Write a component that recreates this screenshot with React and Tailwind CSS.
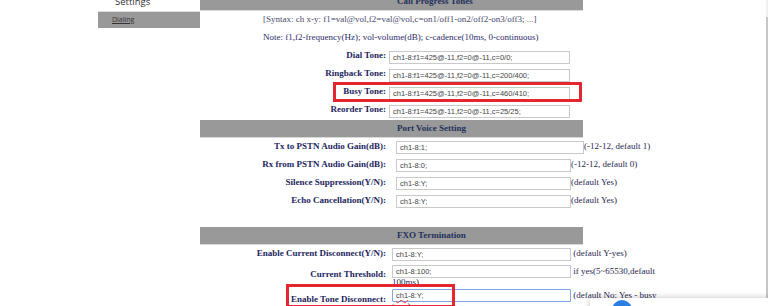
const serif = { fontFamily: '"Liberation Serif", "Times New Roman", serif' };

const callRows = [
  ['Dial Tone:', 'ch1-8:f1=425@-11,f2=0@-11,c=0/0;'],
  ['Ringback Tone:', 'ch1-8:f1=425@-11,f2=0@-11,c=200/400;'],
  ['Busy Tone:', 'ch1-8:f1=425@-11,f2=0@-11,c=460/410;'],
  ['Reorder Tone:', 'ch1-8:f1=425@-11,f2=0@-11,c=25/25;'],
];

const voiceRows = [
  ['Tx to PSTN Audio Gain(dB):', 'ch1-8:1;', '(-12-12, default 1)', 'w-[188px]'],
  ['Rx from PSTN Audio Gain(dB):', 'ch1-8:0;', '(-12-12, default 0)', 'w-[175px]'],
  ['Silence Suppression(Y/N):', 'ch1-8:Y;', '(default Yes)', 'w-[175px]'],
  ['Echo Cancellation(Y/N):', 'ch1-8:Y;', '(default Yes)', 'w-[175px]'],
];

function Field({ value, width }) {
  return (
    <input
      readOnly
      value={value}
      className={`${width} inline-block h-[13px] border border-[#c9c9c9] bg-white px-[3px] align-middle text-[7.5px] text-[#444] outline-none`}
      style={{ fontFamily: '"Liberation Sans", Arial, sans-serif' }}
    />
  );
}

function SectionHeader({ title }) {
  return (
    <div className="h-[18px] w-[383px] border-b border-[#d9d9d9] bg-[#999999]">
      <div className="flex h-[17px] items-center pl-[197px] text-[9px] font-bold text-[#23305c]" style={serif}>
        {title}
      </div>
    </div>
  );
}

function Label({ children }) {
  return (
    <div className="w-[188px] shrink-0 pr-[2px] text-right text-[9px] font-bold text-[#1d1f5e]" style={serif}>
      {children}
    </div>
  );
}

export default function App() {
  return (
    <div className="relative h-[306px] w-[768px] overflow-hidden bg-white" style={serif}>
      <div className="-mt-[7px] flex">
        {/* sidebar */}
        <div className="w-[200px] shrink-0 pl-[98px]">
          <div className="flex h-[18px] items-center pl-[17px] text-[9.5px] text-[#333]" style={{ fontFamily: '"Open Sans", sans-serif' }}>
            Settings
          </div>
          <div className="flex h-[17px] items-center border-t border-[#dcdcdc] bg-[#999999] pl-[14px] text-[7px] text-[#333] underline" style={{ fontFamily: '"Open Sans", sans-serif' }}>
            Dialing
          </div>
        </div>

        {/* main form */}
        <div className="flex-1">
          <SectionHeader title="Call Progress Tones" />
          <div className="flex h-[18px] items-center pl-[63px] text-[9px] text-[#4a4a6e]">
            [Syntax: ch x-y: f1=val@vol,f2=val@vol,c=on1/off1-on2/off2-on3/off3; ...]
          </div>
          <div className="flex h-[18px] items-center pl-[63px] text-[9px] text-[#2c2c6a]">
            Note: f1,f2-frequency(Hz); vol-volume(dB); c-cadence(10ms, 0-continuous)
          </div>
          {callRows.map(([label, value]) => (
            <div key={label} className="flex h-[18px] items-center">
              <Label>{label}</Label>
              <div className="pl-[1px]">
                <Field value={value} width="w-[181px]" />
              </div>
            </div>
          ))}

          <div className="mt-px">
            <SectionHeader title="Port Voice Setting" />
          </div>
          {voiceRows.map(([label, value, note, width]) => (
            <div key={label} className="flex h-[18px] items-center">
              <Label>{label}</Label>
              <div className="whitespace-nowrap pl-[8px] text-[9px] text-[#27274f]">
                <Field value={value} width={width} />
                <span className="align-middle">{note}</span>
              </div>
            </div>
          ))}

          <div className="h-[17px]" />
          <SectionHeader title="FXO Termination" />

          <div className="flex h-[18px] items-center">
            <Label>Enable Current Disconnect(Y/N):</Label>
            <div className="whitespace-nowrap pl-[4px] text-[9px] text-[#27274f]">
              <Field value="ch1-8:Y;" width="w-[179px]" />
              <span className="align-middle"> (default Y-yes)</span>
            </div>
          </div>

          <div className="flex items-center">
            <Label>Current Threshold:</Label>
            <div className="w-[270px] pt-[2px] pl-[4px] text-[9px] leading-[9px] text-[#27274f]">
              <Field value="ch1-8:100;" width="w-[179px]" />
              <span className="align-middle"> if yes(5~65530,default 100ms)</span>
            </div>
          </div>

          <div className="flex items-center">
            <Label>Enable Tone Disconnect:</Label>
            <div className="w-[270px] pt-[2px] pl-[4px] text-[9px] leading-[9px] text-[#27274f]">
              <span
                className="inline-block h-[13px] w-[179px] rounded-[1px] border border-[#7fa6e0] bg-white px-[3px] align-middle text-[7.5px] leading-[11px] text-[#444]"
                style={{ fontFamily: '"Liberation Sans", Arial, sans-serif' }}
              >
                <span className="underline decoration-[#e33] decoration-wavy">ch1</span>-8:Y;
              </span>
              <span className="align-middle"> (default No; Yes - busy tone)</span>
            </div>
          </div>
        </div>
      </div>

      {/* highlight boxes */}
      <div className="absolute left-[333px] top-[82px] h-[20px] w-[249px] border-[3px] border-[#e3262f]" />
      <div className="absolute left-[286px] top-[284px] h-[24px] w-[169px] border-[3px] border-[#e3262f]" />

      {/* scrollbar edge */}
      <div className="absolute right-0 top-0 h-[17px] w-[2px] bg-[#f0f0f0]" />
      <div className="absolute bottom-0 right-0 top-[17px] w-[2px] bg-[#c6c6c6]" />

      {/* notification popup */}
      <div className="absolute left-[590px] right-0 top-[298px] h-[40px] rounded-tl-[3px] bg-white shadow-[0_0_6px_rgba(0,0,0,0.25)]">
        <div className="flex items-start pt-[2px]">
          <div className="ml-[22px] h-[20px] w-[20px] rounded-full bg-[#2a7de1]" />
          <div className="ml-[10px] pt-[3px] text-[11px] text-[#555]" style={{ fontFamily: '"Open Sans", sans-serif' }}>
            Telecom Settings
          </div>
        </div>
      </div>
    </div>
  );
}
